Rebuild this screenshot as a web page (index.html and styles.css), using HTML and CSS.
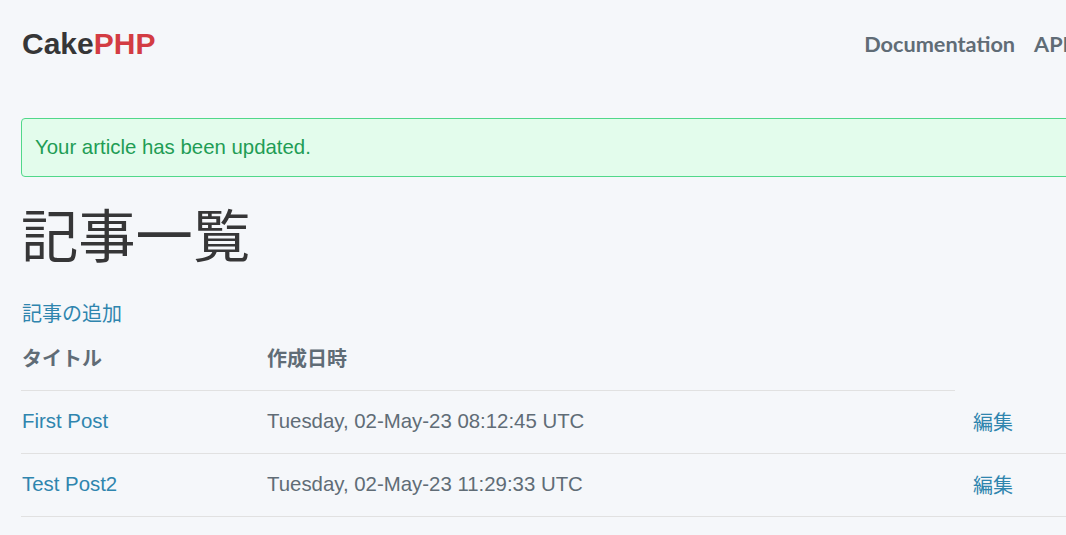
FILE: index.html
```html
<!DOCTYPE html>
<html lang="ja">
<head>
<meta charset="utf-8">
<title>Articles</title>
<link rel="stylesheet" href="styles.css">
</head>
<body>
<div class="page">
  <nav class="top-nav">
    <div class="top-nav-title">
      <a href="#"><span class="cake">Cake</span><span class="php">PHP</span></a>
    </div>
    <div class="top-nav-links">
      <a href="#">Documentation</a>
      <a href="#">API</a>
    </div>
  </nav>
  <main class="main">
    <div class="message success">Your article has been updated.</div>
    <h1 class="title">記事一覧</h1>
    <a class="add-link" href="#">記事の追加</a>
    <table class="articles">
      <thead>
        <tr>
          <th class="col-title">タイトル</th>
          <th class="col-date">作成日時</th>
        </tr>
      </thead>
      <tbody>
        <tr>
          <td><a href="#">First Post</a></td>
          <td>Tuesday, 02-May-23 08:12:45 UTC</td>
          <td class="col-action"><a href="#">編集</a></td>
        </tr>
        <tr>
          <td><a href="#">Test Post2</a></td>
          <td>Tuesday, 02-May-23 11:29:33 UTC</td>
          <td class="col-action"><a href="#">編集</a></td>
        </tr>
      </tbody>
    </table>
  </main>
</div>
</body>
</html>
```

FILE: styles.css
```css
html, body {
  margin: 0;
  padding: 0;
  background: #f5f7fa;
  overflow: hidden;
}

body {
  font-family: "Liberation Sans", Arial, "Noto Sans CJK JP", sans-serif;
  color: #363637;
}

a {
  text-decoration: none;
  color: #2f85ae;
}

.page {
  width: 1160px;
  padding-left: 21px;
  box-sizing: border-box;
}

.top-nav {
  display: flex;
  align-items: center;
  justify-content: space-between;
  height: 88px;
  width: 1048px;
}

.top-nav-title a {
  font-family: "Liberation Sans", Arial, sans-serif;
  font-weight: bold;
  font-size: 30px;
  line-height: 1;
  display: block;
  margin-left: 1px;
}

.top-nav-title .cake {
  color: #363637;
}

.top-nav-title .php {
  color: #d33c43;
}

.top-nav-links {
  display: flex;
  gap: 19px;
}

.top-nav-links a {
  font-family: Lato, "Noto Sans", sans-serif;
  font-weight: bold;
  font-size: 21.7px;
  color: #606c76;
}

.main {
  padding-top: 30px;
}

.message {
  border: 1px solid;
  border-radius: 4px;
  padding: 0 13px;
  height: 57px;
  display: flex;
  align-items: center;
  font-size: 20.4px;
}

.message.success {
  background: #e3fcec;
  color: #1f9d55;
  border-color: #51d88a;
}

.title {
  font-family: "Noto Sans CJK JP", "Liberation Sans", sans-serif;
  font-weight: normal;
  font-size: 57.3px;
  line-height: 1;
  margin: 27px 0 0 0;
  color: #363637;
}

.add-link {
  display: block;
  width: max-content;
  font-family: "Noto Sans CJK JP", sans-serif;
  font-size: 20px;
  line-height: 1;
  margin-top: 42px;
  margin-left: 1px;
}

.articles {
  border-collapse: collapse;
  border-spacing: 0;
  width: 1130px;
  margin-top: 7px;
}

.articles th,
.articles td {
  text-align: left;
  padding: 0 0 2px 0;
  height: 60px;
  border-bottom: 1px solid #e1e1e1;
  vertical-align: middle;
  font-size: 20.4px;
  color: #606c76;
}

.articles th {
  font-family: "Noto Sans CJK JP", sans-serif;
  font-weight: bold;
  font-size: 20px;
  height: 52px;
  padding-bottom: 7px;
  padding-top: 1px;
}

.articles .col-title {
  width: 245px;
  padding-left: 1px;
}

.articles td:first-child {
  padding-left: 1px;
}

.articles .col-date {
  width: 688px;
}

.articles .col-action {
  padding-left: 18px;
}

.articles .col-action a {
  font-family: "Noto Sans CJK JP", sans-serif;
  font-size: 20px;
}
```
